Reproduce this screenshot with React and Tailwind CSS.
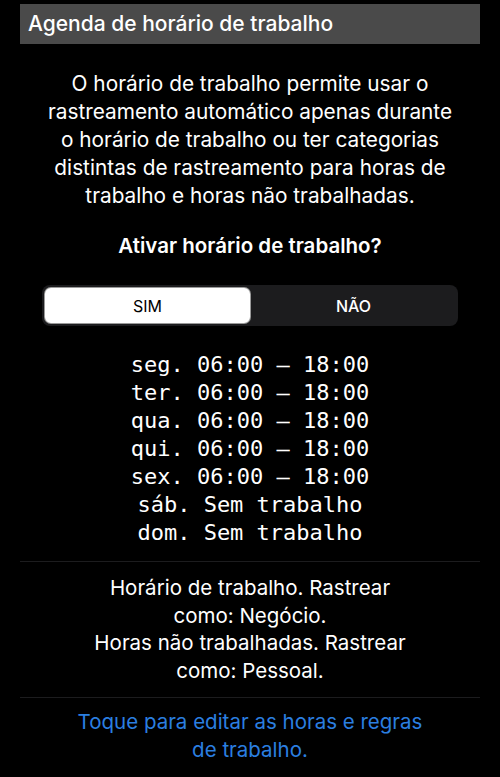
export default function App() {
  const days = [
    "seg. 06:00 – 18:00",
    "ter. 06:00 – 18:00",
    "qua. 06:00 – 18:00",
    "qui. 06:00 – 18:00",
    "sex. 06:00 – 18:00",
    "sáb. Sem trabalho",
    "dom. Sem trabalho",
  ];

  return (
    <div className="min-h-[777px] w-[500px] bg-black text-white font-['Inter',sans-serif]">
      <div className="px-5 pt-1">
        <div className="flex h-10 items-center bg-[#4a4a4a] px-2 text-[21px] font-medium">
          Agenda de horário de trabalho
        </div>

        <p className="mt-[26px] text-center text-[20.8px] leading-[28px]">
          O horário de trabalho permite usar o
          <br />
          rastreamento automático apenas durante
          <br />
          o horário de trabalho ou ter categorias
          <br />
          distintas de rastreamento para horas de
          <br />
          trabalho e horas não trabalhadas.
        </p>

        <p className="mt-[22px] text-center text-[20.5px] font-semibold leading-[28px]">
          Ativar horário de trabalho?
        </p>

        <div className="mx-[22px] mt-[25px] flex h-[41px] rounded-lg bg-[#1c1c1e] p-[2px]">
          <button className="flex-1 rounded-[7px] border border-black/40 bg-white text-[16px] text-black">
            SIM
          </button>
          <button className="flex-1 text-[16px] font-medium text-white">
            NÃO
          </button>
        </div>

        <div className="mt-[25px] text-center font-['DejaVu_Sans_Mono',monospace] text-[22px] leading-[28px]">
          {days.map((d) => (
            <div key={d}>{d}</div>
          ))}
        </div>

        <div className="mt-[14px] border-t border-[#1c1c1e]" />

        <p className="mt-[12px] text-center text-[20.5px] leading-[27.7px]">
          Horário de trabalho. Rastrear
          <br />
          como: Negócio.
          <br />
          Horas não trabalhadas. Rastrear
          <br />
          como: Pessoal.
        </p>

        <div className="mt-[12px] border-t border-[#1c1c1e]" />

        <p className="mt-[10px] text-center text-[20.5px] leading-[28px] text-[#2b7fe0]">
          Toque para editar as horas e regras
          <br />
          de trabalho.
        </p>
      </div>
    </div>
  );
}
